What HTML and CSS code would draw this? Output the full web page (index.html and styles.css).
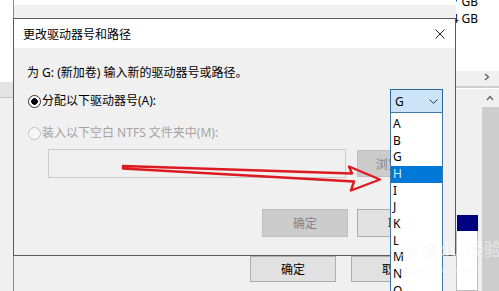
FILE: index.html
```html
<!DOCTYPE html>
<html lang="zh-CN">
<head>
    <meta charset="UTF-8">
    <title>更改驱动器号和路径</title>
    <link rel="stylesheet" href="styles.css">
</head>
<body>
<div class="desk">
    <div class="left-strip">
        <div class="ls-white"></div>
        <div class="ls-grey"></div>
        <div class="ls-line"></div>
    </div>

    <!-- 后面那个窗口 -->
    <div class="back">
        <div class="back-top"></div>
        <div class="back-btns">
            <div class="btn">确定</div>
            <div class="btn">取消</div>
        </div>
    </div>

    <!-- 右侧磁盘管理窗口 -->
    <div class="side">
        <div class="side-list">
            <div>7 GB</div>
            <div>4 GB</div>
        </div>
        <div class="side-hbar">
            <svg width="6" height="8" viewBox="0 0 6 8"><polyline points="1,1 4.5,4 1,7" fill="none" stroke="#606060" stroke-width="1.3"/></svg>
        </div>
        <div class="side-lower">
            <div class="side-col">
                <div class="side-sel"></div>
                <div class="side-box"></div>
            </div>
            <div class="side-scroll">
                <div class="sc-up">
                    <svg width="8" height="6" viewBox="0 0 8 6"><polyline points="1,5 4,1.5 7,5" fill="none" stroke="#606060" stroke-width="1.3"/></svg>
                </div>
                <div class="sc-thumb"></div>
            </div>
        </div>
    </div>

    <!-- 前面的对话框 -->
    <div class="dialog">
        <div class="title">
            <span>更改驱动器号和路径</span>
            <svg class="close" width="10" height="10" viewBox="0 0 10 10"><path d="M0.5 0.5 L9.5 9.5 M9.5 0.5 L0.5 9.5" stroke="#222" stroke-width="1"/></svg>
        </div>
        <div class="body">
            <p class="tip">为 G: (新加卷) 输入新的驱动器号或路径。</p>
            <div class="row row1">
                <label class="opt"><span class="radio on"></span>分配以下驱动器号(A):</label>
                <div class="combo">
                    <span>G</span>
                    <svg width="9" height="5" viewBox="0 0 9 5"><polyline points="0.5,0.5 4.5,4.3 8.5,0.5" fill="none" stroke="#333" stroke-width="1"/></svg>
                </div>
            </div>
            <div class="row row2">
                <label class="opt off"><span class="radio"></span>装入以下空白 NTFS 文件夹中(M):</label>
            </div>
            <div class="row row3">
                <div class="path"></div>
                <div class="btn dis">浏览(B)...</div>
            </div>
            <div class="row btns">
                <div class="btn dis">确定</div>
                <div class="btn">取消</div>
            </div>
        </div>
    </div>

    <ul class="drop">
        <li>A</li>
        <li>B</li>
        <li>G</li>
        <li class="cur">H</li>
        <li>I</li>
        <li>J</li>
        <li>K</li>
        <li>L</li>
        <li>M</li>
        <li>N</li>
        <li>O</li>
    </ul>

    <svg class="arrow" width="499" height="291" viewBox="0 0 499 291">
        <polygon points="123,166 352,173.5 349,166.5 380,179.5 351,190.5 354,181.5 123,168.5"
                 fill="none" stroke="#dc1a1f" stroke-width="2.4" stroke-linejoin="round"/>
    </svg>

    <div class="mark">
        <div class="mk-big">Bai<span class="paw">❀</span>du 经验</div>
        <div class="mk-small">jingyan.baidu.com</div>
    </div>
</div>
</body>
</html>
```

FILE: styles.css
```css
*{
    margin: 0;
    padding: 0;
    box-sizing: border-box;
}

body{
    background: #f0f0f0;
    font-family: "Noto Sans", "Noto Sans CJK SC", sans-serif;
    font-size: 12px;
    color: #000;
}

.desk{
    position: relative;
    width: 499px;
    height: 291px;
    overflow: hidden;
}

/* 最左边一条 */
.left-strip{
    position: absolute;
    left: 0;
    top: 0;
    width: 13px;
    height: 291px;
}
.ls-white{
    height: 82px;
    background: #fff;
}
.ls-grey{
    height: 15px;
    background: #e3e3e3;
}
.ls-line{
    height: 1px;
    background: #c4c4c4;
}

/* 后面的窗口 */
.back{
    position: absolute;
    left: 13px;
    top: 0;
    width: 486px;
    height: 291px;
    border-left: 1px solid #8a8a8a;
    display: flex;
    flex-direction: column;
    justify-content: space-between;
}
.back-top{
    height: 5px;
    background: #fff;
}
.back-btns{
    display: flex;
    gap: 15px;
    padding: 0 0 9px 236px;
}

.btn{
    width: 86px;
    height: 26px;
    border: 1px solid #adadad;
    background: #e1e1e1;
    display: flex;
    align-items: center;
    justify-content: center;
    white-space: nowrap;
}
.btn.dis{
    background: #cccccc;
    border-color: #bfbfbf;
    color: #838383;
}

/* 右侧 */
.side{
    position: absolute;
    left: 456px;
    top: 0;
    width: 43px;
    height: 291px;
    display: flex;
    flex-direction: column;
}
.side-list{
    height: 80px;
    background: #fff;
    display: flex;
    flex-direction: column;
    align-items: flex-end;
    padding-right: 21px;
    line-height: 17px;
    white-space: nowrap;
    overflow: hidden;
}
.side-list div:first-child{
    margin-top: -7px;
}
.side-hbar{
    height: 18px;
    background: #f0f0f0;
    display: flex;
    align-items: center;
    justify-content: flex-end;
    padding: 0 9px 4px 0;
    border-bottom: 2px solid #cfcfcf;
}
.side-lower{
    flex: 1;
    display: flex;
    border-top: 1px solid #fff;
}
.side-col{
    width: 24px;
    padding: 126px 2px 0 1px;
}
.side-sel{
    height: 16px;
    background: #000080;
}
.side-box{
    height: 60px;
    background: #fff;
    border: 1px solid #bdbdbd;
    border-top: none;
    margin-left: -1px;
}
.side-scroll{
    flex: 1;
    display: flex;
    flex-direction: column;
}
.sc-up{
    height: 18px;
    display: flex;
    align-items: center;
    justify-content: center;
}
.sc-thumb{
    flex: 1;
    margin-left: 2px;
    background: #cdcdcd;
}

/* 对话框 */
.dialog{
    position: absolute;
    left: 13px;
    top: 18px;
    width: 443px;
    height: 238px;
    border: 1px solid #5a5a5a;
    background: #f0f0f0;
    display: flex;
    flex-direction: column;
}
.title{
    height: 29px;
    background: #fff;
    display: flex;
    align-items: center;
    justify-content: space-between;
    padding: 0 10px 0 9px;
}
.body{
    padding: 17px 12px 0 13px;
    display: flex;
    flex-direction: column;
}
.tip{
    height: 16px;
    line-height: 16px;
}
.row{
    display: flex;
    align-items: center;
}
.row1{
    margin-top: 8px;
    height: 24px;
    justify-content: space-between;
}
.row2{
    margin-top: 12px;
    height: 16px;
}
.row3{
    margin-top: 8px;
    height: 29px;
}
.btns{
    margin-top: 31px;
    justify-content: flex-end;
    gap: 9px;
}
.btns .btn{
    height: 28px;
}

.opt{
    display: flex;
    align-items: center;
    line-height: 16px;
}
.opt.off{
    color: #a3a3a3;
}
.radio{
    width: 13px;
    height: 13px;
    margin: 0 1px 0 1px;
    border: 1px solid #333;
    border-radius: 50%;
    background: #fff;
}
.radio.on{
    background: radial-gradient(circle, #000 0, #000 3px, #fff 3.6px);
}
.off .radio{
    border-color: #c2c2c2;
    background: #f7f7f7;
}

.combo{
    width: 53px;
    height: 24px;
    border: 1px solid #2f6b9a;
    background: #cce4f7;
    display: flex;
    align-items: center;
    justify-content: space-between;
    padding: 0 4px 0 4px;
}

.path{
    margin-left: 21px;
    width: 298px;
    height: 29px;
    border: 1px solid #cbcbcb;
    background: #f0f0f0;
}
.row3 .btn{
    margin-left: auto;
    height: 27px;
}

/* 下拉列表 */
.drop{
    position: absolute;
    left: 390px;
    top: 112px;
    width: 53px;
    height: 200px;
    border: 1px solid #3f76a2;
    background: #fff;
    list-style: none;
    padding-top: 3px;
}
.drop li{
    height: 16.67px;
    line-height: 16.67px;
    padding-left: 2px;
}
.drop .cur{
    background: #0078d7;
    color: #d4ebff;
}

.arrow{
    position: absolute;
    left: 0;
    top: 0;
    pointer-events: none;
}

/* 水印 */
.mark{
    position: absolute;
    left: 396px;
    top: 236px;
    color: rgba(255, 255, 255, 0.45);
    -webkit-text-stroke: 0.3px rgba(160, 160, 160, 0.15);
    pointer-events: none;
    white-space: nowrap;
}
.mk-big{
    font-size: 18px;
    font-weight: bold;
    line-height: 26px;
}
.paw{
    font-size: 14px;
}
.mk-small{
    font-size: 9px;
    line-height: 12px;
    padding-left: 4px;
}
```
